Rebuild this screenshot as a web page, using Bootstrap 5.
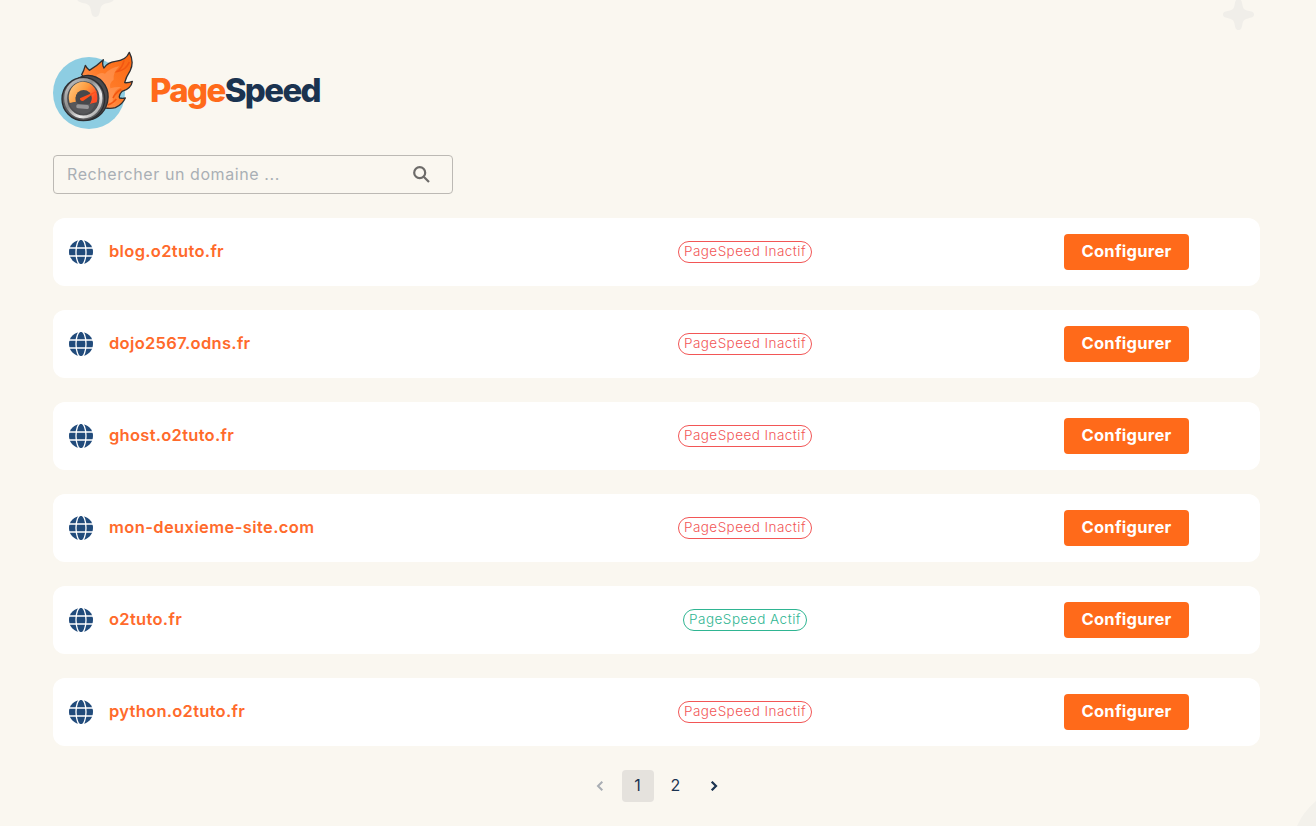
<!DOCTYPE html>
<html lang="fr">
<head>
<meta charset="utf-8">
<meta name="viewport" content="width=device-width, initial-scale=1">
<title>PageSpeed</title>
<link href="https://cdn.jsdelivr.net/npm/bootstrap@5.3.0/dist/css/bootstrap.min.css" rel="stylesheet">
<style>
body{background:#faf7f0;color:#1b3350;font-family:Inter,"Liberation Sans",sans-serif;font-size:16px;height:826px;overflow:hidden;position:relative}
main{padding:50px 56px 0 53px}
.brand-title{font-size:33px;line-height:40px;font-weight:800;letter-spacing:-1.5px;margin:0 0 0 15px}
.brand-title span span{color:#ff6a1a}
.logo{width:82px;height:80px}
.search-box{width:400px;height:39px;margin-top:25px;border:1px solid #bcb9b4;border-radius:4px;padding:0 22px 0 13px}
.search-box input{background:none;font-size:16px;letter-spacing:.58px;color:#1b3350;padding-bottom:2px!important}
.search-box input::placeholder{color:#a9afb5;opacity:1}
.domain{height:68px;background:#fff;border-radius:12px}
.domain-list{gap:24px;margin-top:24px}
.c-name{width:444px;padding-left:16px;gap:16px}
.c-state{width:496px}
.c-action{width:267px}
.domain-link{color:#ff6a2b;font-size:16.5px;font-weight:600;text-decoration:none;line-height:24px;white-space:nowrap;padding-bottom:2px}
.state{height:22px;width:134px;border:1px solid #f25656;border-radius:11px;color:#f25656;font-size:13.5px;font-weight:300;line-height:19px;letter-spacing:.3px;text-align:center;white-space:nowrap}
.state.on{width:124px;color:#2fb592;border-color:#2fb592}
.btn-config{width:125px;height:36px;padding:0 0 2px;border:0;border-radius:4px;background:#ff6a1a;color:#fff;font-weight:700;font-size:16.5px;line-height:34px}
.btn-config:hover{background:#ee5d10;color:#fff}
.pager{margin-top:24px;gap:6px}
.pager a{width:32px;height:32px;border-radius:4px;color:#1b3350;text-decoration:none}
.pager .num{padding-bottom:2px}
.pager .current{background:#e5e2dd}
.deco{position:absolute;pointer-events:none}
</style>
</head>
<body>
<svg class="deco" style="left:77px;top:-20px" width="37" height="37" viewBox="0 0 32 32"><path id="spark" fill="#f0eee9" d="M16 0c3 0 3.500 3 4 6 .7 4 2 5.500 6 6.200 3 .5 6 1 6 3.800s-3 3.300-6 4c-4 .8-5.300 2-6 6-.5 3-1 6-4 6s-3.500-3-4-6c-.7-4-2-5.200-6-6-3-.7-6-1.200-6-4s3-3.300 6-3.800c4-.7 5.300-2.200 6-6.200.5-3 1-6 4-6z"/></svg>
<svg class="deco" style="left:1223px;top:-1px" width="31" height="31" viewBox="0 0 32 32"><use href="#spark"/></svg>
<svg class="deco" style="right:0;bottom:0" width="20" height="26" viewBox="0 0 20 26"><path d="M20 1Q7 12 1 26h19z" fill="#f3f1eb"/></svg>
<main>
<header class="d-flex align-items-center">
<svg class="logo" viewBox="39 30 246 240" aria-hidden="true">
<defs><linearGradient id="fire" x1="0" y1="1" x2="1" y2="0"><stop stop-color="#ffa26d"/><stop offset=".5" stop-color="#ff7a27"/><stop offset="1" stop-color="#f96510"/></linearGradient>
<linearGradient id="dial" x1="0" y1="0" x2="1" y2=".5"><stop stop-color="#ffd08c"/><stop offset=".6" stop-color="#ff9b3d"/><stop offset="1" stop-color="#ff4d24"/></linearGradient>
<linearGradient id="rim" x1="0" y1="0" x2="1" y2="1"><stop stop-color="#c9c9c9"/><stop offset=".4" stop-color="#8c8c8c"/><stop offset=".7" stop-color="#ececec"/><stop offset="1" stop-color="#888"/></linearGradient></defs>
<circle cx="147" cy="159" r="108" fill="#8dcde2"/>
<path d="M125 104Q131 94 136 76Q139 84 148 91Q170 78 190 59Q185 74 192 84Q204 66 226 64Q258 62 268 37Q283 65 271 91Q258 111 254 128Q266 129 277 124Q273 147 246 154Q235 166 239 174Q248 176 256 174Q247 194 226 203Q213 207 196 204L153 134Z" fill="url(#fire)" stroke="#303033" stroke-width="4" stroke-linejoin="round"/>
<path d="M160 115Q179 94 195 101Q215 81 238 79Q218 99 221 119Q207 129 211 145Q232 139 244 142Q221 151 222 168Q212 182 225 190Q211 194 202 183L191 135Z" fill="#ffa267" opacity=".5"/>
<path d="M252 61Q248 82 232 94Q258 91 268 66M204 195Q221 188 229 177M244 148Q226 158 219 174" fill="none" stroke="#f35712" stroke-width="5"/>
<ellipse cx="143" cy="173" rx="61" ry="67" transform="rotate(12 143 173)" fill="#494a4d" stroke="#2c2d30" stroke-width="4"/>
<ellipse cx="130" cy="177" rx="64" ry="65" fill="#57585b" stroke="#2c2d30" stroke-width="4"/>
<ellipse cx="130" cy="175" rx="53" ry="56" fill="#4c4d50" stroke="url(#rim)" stroke-width="9"/>
<path d="M89 189A43 47 0 1 1 170 187L149 192A24 24 0 1 0 108 185Z" fill="url(#dial)"/>
<circle cx="131" cy="174" r="24" fill="#47484b"/>
<path d="M88 191L108 185Q111 191 117 192L148 192L165 191Q157 219 130 222Q101 220 88 191Z" fill="#56575a"/>
<path d="M120 175L175 151L129 183Q120 184 120 175Z" fill="#ff4e18"/>
<rect x="109" y="194" width="38" height="12" rx="5" fill="#969698" transform="rotate(5 128 198)"/>
</svg>
<h1 class="brand-title"><span data-width="170"><span>Page</span>Speed</span></h1>
</header>
<form class="search-box d-flex align-items-center" onsubmit="return false">
<input class="border-0 p-0 flex-grow-1 shadow-none" type="text" placeholder="Rechercher un domaine ..." aria-label="Rechercher un domaine">
<svg width="17" height="17" viewBox="0 0 17 17" fill="none" stroke="#6d6b69" stroke-width="2.200"><circle cx="6.700" cy="6.700" r="5.500"/><path d="M10.700 10.700L16 16"/></svg>
</form>
<section class="domain-list d-flex flex-column" id="domains"></section>
<nav class="pager d-flex justify-content-center" aria-label="Pagination">
<a href="#" class="d-flex align-items-center justify-content-center"><svg width="8" height="10" viewBox="0 0 8 10" fill="none" stroke="#a9aeb4" stroke-width="2"><path d="M6.300 .7L2 5l4.300 4.300"/></svg></a>
<a href="#" class="num current d-flex align-items-center justify-content-center">1</a>
<a href="#" class="num d-flex align-items-center justify-content-center">2</a>
<a href="#" class="d-flex align-items-center justify-content-center"><svg width="8" height="10" viewBox="0 0 8 10" fill="none" stroke="#1b3350" stroke-width="2.200"><path d="M1.700 .7L6 5L1.700 9.300"/></svg></a>
</nav>
</main>
<script src="https://cdn.jsdelivr.net/npm/bootstrap@5.3.0/dist/js/bootstrap.bundle.min.js"></script>
<script>
const domains=[["blog.o2tuto.fr",115],["dojo2567.odns.fr",141.5],["ghost.o2tuto.fr",125],["mon-deuxieme-site.com",205.5],["o2tuto.fr",73,true],["python.o2tuto.fr",136]];
document.getElementById("domains").innerHTML=domains.map(([name,width,active])=>`
<article class="domain d-flex align-items-center">
<div class="c-name d-flex align-items-center">
<svg width="24" height="24" viewBox="0 0 24 24"><circle cx="12" cy="12" r="12" fill="#214b7b"/><g fill="none" stroke="#fff" stroke-width="1.300"><ellipse cx="12" cy="12" rx="5" ry="13"/><path d="M0 8h24M0 16h24"/></g></svg>
<a class="domain-link" href="#" data-width="${width}">${name}</a></div>
<div class="c-state d-flex justify-content-center"><span class="state ${active?"on":""}"><span data-width="${active?112:122}">PageSpeed ${active?"Actif":"Inactif"}</span></span></div>
<div class="c-action d-flex justify-content-center"><button class="btn btn-config" type="button"><span data-width="90">Configurer</span></button></div>
</article>`).join("");
document.querySelectorAll("[data-width]").forEach(el=>{
el.style.letterSpacing="0px";
const gap=(el.dataset.width-el.getBoundingClientRect().width)/el.textContent.length;
el.style.letterSpacing=gap+"px";
});
</script>
</body>
</html>
